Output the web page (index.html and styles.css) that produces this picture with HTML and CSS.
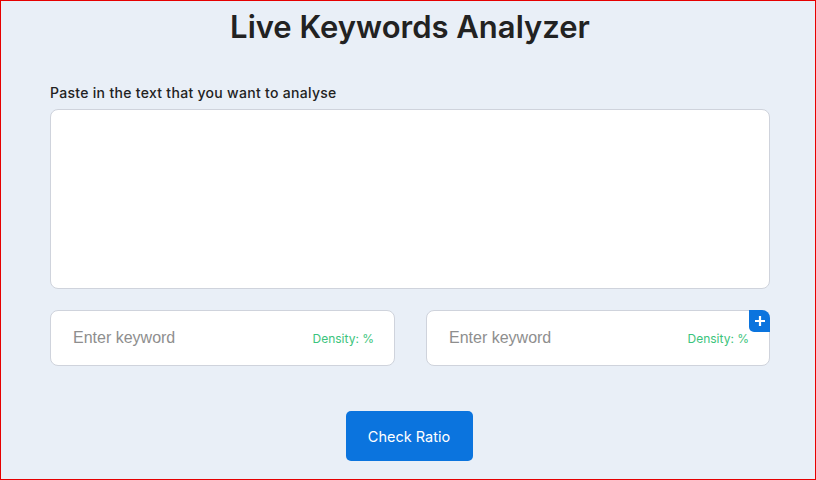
FILE: index.html
```html
<!DOCTYPE html>
<html lang="en">
<head>
    <meta charset="UTF-8">
    <meta name="viewport" content="width=device-width, initial-scale=1.0">
    <title>Live Keywords Analyzer</title>
    <link rel="stylesheet" href="styles.css">
</head>
<body>
    <div class="analyzer">
        <h1 class="title">Live Keywords Analyzer</h1>

        <!-- Text input -->
        <label class="text-label" for="textInput">Paste in the text that you want to analyse</label>
        <textarea class="text-input" id="textInput"></textarea>

        <!-- Keywords -->
        <div class="keywords">
            <div class="keyword-box">
                <input type="text" class="keyword-input" placeholder="Enter keyword">
                <span class="density">Density: %</span>
            </div>
            <div class="keyword-box">
                <input type="text" class="keyword-input" placeholder="Enter keyword">
                <span class="density">Density: %</span>
                <button class="add-btn" title="Add keyword">
                    <svg width="10" height="10" viewBox="0 0 10 10">
                        <path d="M5 1v8M1 5h8" stroke="#fff" stroke-width="2.2" stroke-linecap="square"/>
                    </svg>
                </button>
            </div>
        </div>

        <div class="actions">
            <button class="check-btn">Check Ratio</button>
        </div>
    </div>
</body>
</html>
```

FILE: styles.css
```css
:root {
    --bg: #e9eff7;
    --blue: #0b74de;
    --border: #cfd3dc;
    --green: #3cc47c;
}

* {
    margin: 0;
    padding: 0;
    box-sizing: border-box;
}

body {
    height: 480px;
    background: var(--bg);
    border: 1px solid #e60000;
    font-family: "Inter", "Noto Sans", sans-serif;
    color: #1f1f1f;
    overflow: hidden;
}

.analyzer {
    width: 720px;
    margin-left: 49px;
}

.title {
    text-align: center;
    font-size: 31px;
    font-weight: 600;
    letter-spacing: 0;
    line-height: 36px;
    margin-top: 8px;
    color: #222;
}

.text-label {
    display: block;
    font-size: 14px;
    font-weight: 500;
    letter-spacing: 0.3px;
    margin-top: 40px;
    line-height: 16px;
    color: #222;
}

.text-input {
    display: block;
    width: 720px;
    height: 180px;
    margin-top: 8px;
    background: #fff;
    border: 1px solid var(--border);
    border-radius: 8px;
    resize: none;
    outline: none;
    padding: 12px;
    font-family: inherit;
}

.keywords {
    display: grid;
    grid-template-columns: 345px 344px;
    gap: 31px;
    margin-top: 21px;
}

.keyword-box {
    position: relative;
    display: flex;
    align-items: center;
    height: 56px;
    background: #fff;
    border: 1px solid var(--border);
    border-radius: 8px;
    padding: 0 20px 0 22px;
}

.keyword-input {
    flex: 1;
    min-width: 0;
    border: none;
    outline: none;
    background: transparent;
    font-family: "Liberation Sans", Arial, sans-serif;
    font-size: 16px;
    color: #333;
}

.keyword-input::placeholder {
    color: #8e8e8e;
}

.density {
    font-size: 12px;
    color: var(--green);
    white-space: nowrap;
}

.add-btn {
    position: absolute;
    top: -1px;
    right: -1px;
    width: 21px;
    height: 22px;
    border: none;
    background: var(--blue);
    border-radius: 0 8px 0 5px;
    display: flex;
    align-items: center;
    justify-content: center;
    cursor: pointer;
}

.actions {
    display: flex;
    justify-content: center;
    margin-top: 45px;
}

.check-btn {
    width: 127px;
    height: 50px;
    margin-left: -2px;
    background: var(--blue);
    color: #fff;
    border: none;
    border-radius: 5px;
    font-family: inherit;
    font-size: 14.5px;
    cursor: pointer;
}
```
